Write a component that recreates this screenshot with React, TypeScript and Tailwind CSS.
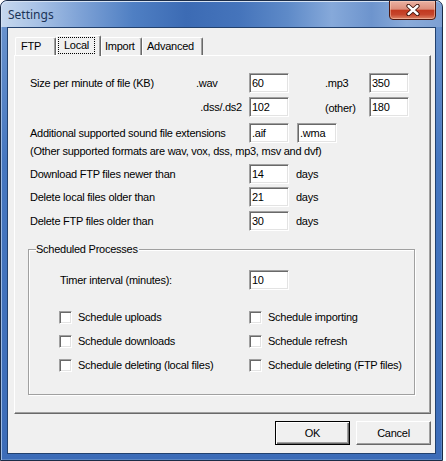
import React from "react";

const FONT = "font-['Liberation_Sans',Arial,sans-serif] text-[11px] tracking-[-0.25px] leading-[13px] text-black";

function TextBox({ value, className = "" }: { value: string; className?: string }) {
  return (
    <div
      className={`w-[40px] h-[20px] shrink-0 bg-white border border-t-[#a0a0a0] border-l-[#a0a0a0] border-b-white border-r-white shadow-[inset_1px_1px_0_#696969,inset_-1px_-1px_0_#e3e3e3] pl-[2px] pt-[1px] flex items-center ${className}`}
    >
      {value}
    </div>
  );
}

function CheckBox() {
  return (
    <div className="w-[13px] h-[13px] shrink-0 bg-white border border-t-[#a0a0a0] border-l-[#a0a0a0] border-b-white border-r-white shadow-[inset_1px_1px_0_#696969,inset_-1px_-1px_0_#e3e3e3]" />
  );
}

function Check({ label }: { label: string }) {
  return (
    <div className="flex items-center h-[13px]">
      <CheckBox />
      <span className="ml-[6px] whitespace-nowrap">{label}</span>
    </div>
  );
}

function Tab({ label, w, selected = false }: { label: string; w: string; selected?: boolean }) {
  if (selected) {
    return (
      <div
        className={`relative z-10 -mb-px h-[21px] ${w} bg-[#f0f0f0] border-t border-l border-white border-r border-r-[#696969] shadow-[inset_-1px_0_0_#a0a0a0] rounded-t-[2px] pl-[1px] pt-px`}
      >
        <span className="inline-block border border-dotted border-black px-[5px] py-px">{label}</span>
      </div>
    );
  }
  return (
    <div
      className={`h-[18px] ${w} bg-[#f0f0f0] border-t border-l border-white border-r border-r-[#696969] shadow-[inset_-1px_0_0_#a0a0a0] rounded-t-[2px] pt-[2px] whitespace-nowrap`}
    >
      {label}
    </div>
  );
}

function Button({ label, def = false }: { label: string; def?: boolean }) {
  if (def) {
    return (
      <div className="w-[75px] h-[24px] border border-black bg-[#f0f0f0] shadow-[inset_1px_1px_0_#fff,inset_-1px_-1px_0_#696969,inset_-2px_-2px_0_#a0a0a0] flex items-center justify-center">
        {label}
      </div>
    );
  }
  return (
    <div className="w-[75px] h-[24px] border border-t-white border-l-white border-b-[#696969] border-r-[#696969] bg-[#f0f0f0] shadow-[inset_-1px_-1px_0_#a0a0a0] flex items-center justify-center">
      {label}
    </div>
  );
}

export default function App() {
  return (
    <div className="w-[446px] h-[461px] bg-white">
      <div className="relative w-[443px] h-[461px] rounded-t-[7px] border border-[#1b2c47] bg-[linear-gradient(to_bottom,#6f97cf,#4677c0_35%,#3c6cb8)] shadow-[inset_1px_1px_0_#9dbbe5,inset_-1px_-1px_0_#5d87c4] flex flex-col overflow-hidden">
        {/* Title bar */}
        <div className="h-[26px] flex items-start rounded-t-[6px] bg-[linear-gradient(to_right,#c6d8ee_0%,#a9c3e6_8%,#7ea2d6_18%,#4f7fc3_30%,#3c6bb4_42%,#4574bb_54%,#5e8ac8_65%,#86a9da_75%,#6d94cd_84%,#8aabd9_92%,#7d9fd2_100%)] shadow-[inset_1px_1px_0_#d5e2f3]">
          <span className="pl-[7px] pt-[6px] font-['Noto_Sans',sans-serif] text-[12px] leading-[16px] text-[#1b3458]">
            Settings
          </span>
          <div className="ml-auto mr-[6px] -mt-px w-[47px] h-[20px] rounded-b-[4px] border border-[#4e170e] bg-[linear-gradient(to_bottom,#eab1a2_0%,#dd8e7b_45%,#c2391f_52%,#c6452c_75%,#de8466_100%)] shadow-[inset_0_0_0_1px_rgba(255,220,200,0.45)] flex items-center justify-center">
            <svg width="14" height="12" viewBox="0 0 14 12">
              <path d="M2.5 2 L11.5 10 M11.5 2 L2.5 10" stroke="#3b1008" strokeWidth="4.2" strokeLinecap="round" fill="none" />
              <path d="M2.5 2 L11.5 10 M11.5 2 L2.5 10" stroke="#ffffff" strokeWidth="2.4" strokeLinecap="round" fill="none" />
            </svg>
          </div>
        </div>
        {/* Client */}
        <div className={`mx-[6px] border border-[#22416e] bg-[#f0f0f0] w-[429px] h-[427px] ${FONT}`}>
          <div className="pl-[6px] pt-[7px]">
            <div className="flex items-end h-[20px] pl-[1px]">
              <Tab label="FTP" w="w-[41px] pl-[5px]" />
              <Tab label="Local" w="w-[45px]" selected />
              <Tab label="Import" w="w-[41px] pl-[3px]" />
              <Tab label="Advanced" w="w-[61px] pl-[4px]" />
            </div>
            <div className="w-[417px] h-[359px] border border-t-white border-l-white border-r-[#696969] border-b-[#696969] shadow-[inset_-1px_-1px_0_#a0a0a0] pt-[17px]">
              {/* Row 1 */}
              <div className="flex items-center h-[20px] ml-[15px]">
                <span className="w-[166px] whitespace-nowrap">Size per minute of file (KB)</span>
                <span className="w-[53px]">.wav</span>
                <TextBox value="60" />
                <span className="w-[36px]" />
                <span className="w-[44px]">.mp3</span>
                <TextBox value="350" />
              </div>
              {/* Row 2 */}
              <div className="flex items-center h-[20px] ml-[15px] mt-[4px]">
                <span className="w-[219px] text-right pr-[7px]">.dss/.ds2</span>
                <TextBox value="102" />
                <span className="w-[36px]" />
                <span className="w-[44px] pt-[3px]">(other)</span>
                <TextBox value="180" />
              </div>
              {/* Row 3 */}
              <div className="flex items-center h-[20px] ml-[15px] mt-[6px]">
                <span className="w-[219px] whitespace-nowrap">Additional supported sound file extensions</span>
                <TextBox value=".aif" />
                <TextBox value=".wma" className="ml-[8px]" />
              </div>
              <div className="ml-[15px] mt-[2px] whitespace-nowrap">
                (Other supported formats are wav, vox, dss, mp3, msv and dvf)
              </div>
              {/* Rows 5-7 */}
              <div className="flex items-center h-[20px] ml-[15px] mt-[6px]">
                <span className="w-[219px] whitespace-nowrap">Download FTP files newer than</span>
                <TextBox value="14" />
                <span className="ml-[7px]">days</span>
              </div>
              <div className="flex items-center h-[20px] ml-[15px] mt-[3px]">
                <span className="w-[219px] whitespace-nowrap">Delete local files older than</span>
                <TextBox value="21" />
                <span className="ml-[7px]">days</span>
              </div>
              <div className="flex items-center h-[20px] ml-[15px] mt-[4px]">
                <span className="w-[219px] whitespace-nowrap">Delete FTP files older than</span>
                <TextBox value="30" />
                <span className="ml-[7px]">days</span>
              </div>
              {/* Group box */}
              <div className="relative ml-[13px] mt-[18px] w-[387px] h-[146px] border border-[#a0a0a0] shadow-[inset_1px_1px_0_#fff,1px_1px_0_#fff]">
                <span className="absolute -top-[7px] left-[7px] bg-[#f0f0f0] pr-[1px] whitespace-nowrap">
                  Scheduled Processes
                </span>
                <div className="flex items-center h-[20px] ml-[31px] mt-[20px]">
                  <span className="w-[189px] whitespace-nowrap">Timer interval (minutes):</span>
                  <TextBox value="10" />
                </div>
                <div className="ml-[30px] mt-[21px] flex flex-col gap-[11px]">
                  <div className="flex">
                    <div className="w-[190px]"><Check label="Schedule uploads" /></div>
                    <Check label="Schedule importing" />
                  </div>
                  <div className="flex">
                    <div className="w-[190px]"><Check label="Schedule downloads" /></div>
                    <Check label="Schedule refresh" />
                  </div>
                  <div className="flex">
                    <div className="w-[190px]"><Check label="Schedule deleting (local files)" /></div>
                    <Check label="Schedule deleting (FTP files)" />
                  </div>
                </div>
              </div>
            </div>
          </div>
          <div className="flex justify-end gap-[6px] pr-[4px] mt-[7px]">
            <Button label="OK" def />
            <Button label="Cancel" />
          </div>
        </div>
      </div>
    </div>
  );
}
